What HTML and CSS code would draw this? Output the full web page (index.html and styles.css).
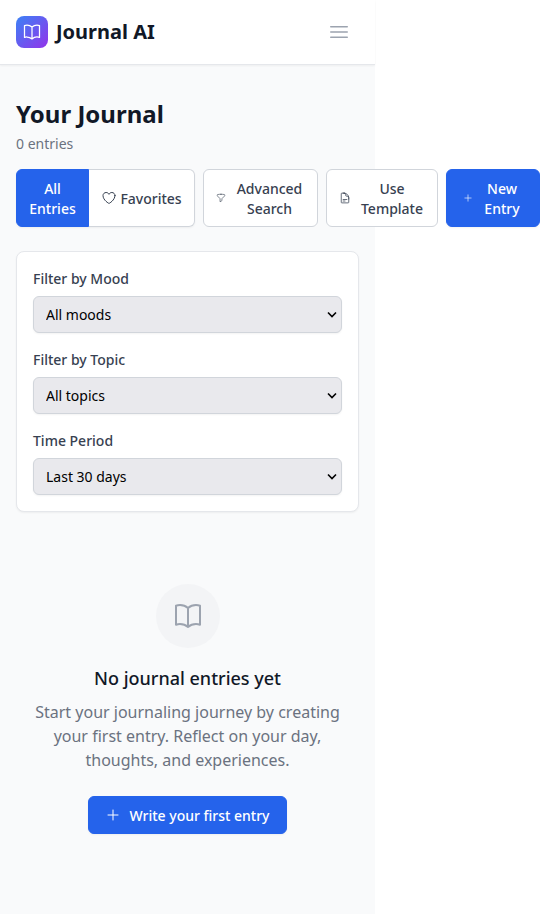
FILE: index.html
```html
<!DOCTYPE html>
<html lang="en">
<head>
  <meta charset="utf-8">
  <meta name="viewport" content="width=device-width, initial-scale=1">
  <title>Journal AI</title>
  <link rel="stylesheet" href="styles.css">
</head>
<body>
  <svg class="sprite" aria-hidden="true">
    <symbol id="book" viewBox="0 0 24 24"><path d="M12 6.042A8.967 8.967 0 0 0 6 3.75c-1.052 0-2.062.18-3 .512v14.25A8.987 8.987 0 0 1 6 18c2.305 0 4.408.867 6 2.292m0-14.25a8.966 8.966 0 0 1 6-2.292c1.052 0 2.062.18 3 .512v14.25A8.987 8.987 0 0 0 18 18a8.967 8.967 0 0 0-6 2.292m0-14.25v14.25"/></symbol>
    <symbol id="plus" viewBox="0 0 24 24"><path d="M12 4.5v15m7.5-7.5h-15"/></symbol>
    <symbol id="chevron" viewBox="0 0 10 8"><path d="M1 1.5 5 5.5 9 1.5"/></symbol>
  </svg>
  <div class="app">
    <header class="header">
      <div class="brand">
        <span class="logo"><svg class="icon icon-md" aria-hidden="true"><use href="#book"/></svg></span>
        <span>Journal AI</span>
      </div>
      <button class="menu" type="button" aria-label="Open menu">
        <svg class="icon icon-lg" viewBox="0 0 24 24" aria-hidden="true"><path d="M3.75 6.75h16.5M3.75 12h16.5m-16.5 5.25h16.5"/></svg>
      </button>
    </header>
    <main class="main">
      <h1>Your Journal</h1>
      <p class="count">0 entries</p>
      <div class="toolbar">
        <div class="segmented">
          <button class="btn active" type="button"><span>All<br>Entries</span></button>
          <button class="btn favorites" type="button">
            <svg class="icon icon-sm" viewBox="0 0 24 24" aria-hidden="true"><path d="M21 8.25c0-2.485-2.099-4.5-4.688-4.5-1.935 0-3.597 1.126-4.312 2.733-.715-1.607-2.377-2.733-4.313-2.733C5.1 3.75 3 5.765 3 8.25c0 7.22 9 12 9 12s9-4.78 9-12Z"/></svg>
            <span>Favorites</span>
          </button>
        </div>
        <button class="btn advanced" type="button">
          <svg class="icon icon-xs" viewBox="0 0 24 24" aria-hidden="true"><path d="M12 3c2.755 0 5.455.232 8.083.678.533.09.917.556.917 1.096v1.044a2.25 2.25 0 0 1-.659 1.591l-5.432 5.432a2.25 2.25 0 0 0-.659 1.591v2.927a2.25 2.25 0 0 1-1.244 2.013L9.75 21v-6.568a2.25 2.25 0 0 0-.659-1.591L3.659 7.409A2.25 2.25 0 0 1 3 5.818V4.774c0-.54.384-1.006.917-1.096A48.32 48.32 0 0 1 12 3Z"/></svg>
          <span class="wrap">Advanced<br>Search</span>
        </button>
        <button class="btn template" type="button">
          <svg class="icon icon-doc" viewBox="0 0 24 24" aria-hidden="true"><path d="M19.5 14.25v-2.625a3.375 3.375 0 0 0-3.375-3.375h-1.5A1.125 1.125 0 0 1 13.5 7.125v-1.5a3.375 3.375 0 0 0-3.375-3.375H8.25m0 12.75h7.5m-7.5 3H12M10.5 2.25H5.625c-.621 0-1.125.504-1.125 1.125v17.25c0 .621.504 1.125 1.125 1.125h12.75c.621 0 1.125-.504 1.125-1.125V11.25a9 9 0 0 0-9-9Z"/></svg>
          <span class="wrap">Use<br>Template</span>
        </button>
        <button class="btn primary new-entry" type="button">
          <svg class="icon icon-xs" aria-hidden="true"><use href="#plus"/></svg>
          <span class="wrap">New<br>Entry</span>
        </button>
      </div>
      <form class="filters">
        <div class="field">
          <label for="mood">Filter by Mood</label>
          <div class="select">
            <select id="mood"><option>All moods</option></select>
            <svg class="chevron" aria-hidden="true"><use href="#chevron"/></svg>
          </div>
        </div>
        <div class="field">
          <label for="topic">Filter by Topic</label>
          <div class="select">
            <select id="topic"><option>All topics</option></select>
            <svg class="chevron" aria-hidden="true"><use href="#chevron"/></svg>
          </div>
        </div>
        <div class="field">
          <label for="period">Time Period</label>
          <div class="select">
            <select id="period"><option>Last 30 days</option></select>
            <svg class="chevron" aria-hidden="true"><use href="#chevron"/></svg>
          </div>
        </div>
      </form>
      <section class="empty">
        <span class="circle"><svg class="icon icon-xl" aria-hidden="true"><use href="#book"/></svg></span>
        <h2>No journal entries yet</h2>
        <p>Start your journaling journey by creating your first entry. Reflect on your day, thoughts, and experiences.</p>
        <button class="btn primary" type="button">
          <svg class="icon icon-sm" aria-hidden="true"><use href="#plus"/></svg>
          <span>Write your first entry</span>
        </button>
      </section>
    </main>
  </div>
</body>
</html>
```
FILE: styles.css
```css
* {
  box-sizing: border-box;
}

body {
  margin: 0;
  background: #fff;
  color: #111827;
  font: 16px/24px "Noto Sans", sans-serif;
}

h1,
h2,
p {
  margin: 0;
}

.sprite {
  position: absolute;
  width: 0;
  height: 0;
}

.app {
  max-width: 375px;
  min-height: 100vh;
  background: #f9fafb;
}

.icon {
  flex: none;
  fill: none;
  stroke: currentColor;
  stroke-width: 1.5;
  stroke-linecap: round;
  stroke-linejoin: round;
}

.icon-xs { width: 10px; height: 16px; }
.icon-doc { width: 12px; height: 16px; }
.icon-sm { width: 16px; height: 16px; }
.icon-md { width: 20px; height: 20px; }
.icon-lg { width: 24px; height: 24px; }
.icon-xl { width: 32px; height: 32px; }

.header {
  display: flex;
  align-items: center;
  justify-content: space-between;
  padding: 16px;
  border-bottom: 1px solid #e5e7eb;
  background: #fff;
  box-shadow: 0 1px 2px rgb(0 0 0 / 5%);
}

.brand {
  display: flex;
  align-items: center;
  gap: 8px;
  font-size: 20px;
  font-weight: 700;
  line-height: 30px;
}

.logo {
  display: grid;
  place-items: center;
  width: 32px;
  height: 32px;
  border-radius: 8px;
  background: linear-gradient(to bottom right, #3b82f6, #9333ea);
  color: #fff;
}

.menu {
  display: flex;
  padding: 0 8px;
  border: 0;
  background: none;
  color: #9ca3af;
}

.main {
  padding: 32px 16px;
}

h1 {
  font-size: 24px;
  font-weight: 700;
  line-height: 34px;
}

.count {
  margin-top: 3px;
  color: #6b7280;
  font-size: 14px;
  line-height: 20px;
}

.toolbar {
  display: flex;
  gap: 8px;
  width: max-content;
  margin-top: 15px;
}

.segmented {
  display: flex;
  border-radius: 6px;
  box-shadow: 0 1px 2px rgb(0 0 0 / 5%);
}

.btn {
  display: inline-flex;
  align-items: center;
  justify-content: center;
  gap: 8px;
  padding: 7px 12px;
  border: 1px solid #d1d5db;
  border-radius: 6px;
  background: #fff;
  color: #374151;
  font: 500 14px/20px "Noto Sans", sans-serif;
}

.btn span {
  padding-top: 2px;
}

.active,
.primary {
  border-color: #2563eb;
  background: #2563eb;
  color: #fff;
}

.primary {
  padding: 7px 16px;
  box-shadow: 0 1px 2px rgb(0 0 0 / 5%);
}

.active {
  width: 73px;
  border-radius: 6px 0 0 6px;
}

.favorites {
  gap: 3px;
  width: 106px;
  border-left: 0;
  border-radius: 0 6px 6px 0;
}

.advanced { width: 115px; }
.template { width: 112px; }
.new-entry { width: 94px; }

.wrap {
  flex: 1;
}

.filters {
  display: grid;
  gap: 16px;
  margin-top: 24px;
  padding: 16px;
  border: 1px solid #e5e7eb;
  border-radius: 8px;
  background: #fff;
  box-shadow: 0 1px 2px rgb(0 0 0 / 5%);
}

.field {
  display: grid;
  gap: 6px;
}

label {
  color: #374151;
  font-size: 14px;
  font-weight: 500;
  line-height: 22px;
}

.select {
  display: grid;
  position: relative;
}

select {
  appearance: none;
  width: 100%;
  height: 37px;
  padding: 8px 32px 7px 12px;
  border: 1px solid #d1d5db;
  border-radius: 6px;
  background-color: #e9e9ed;
  color: #000;
  font: 14px/20px "Noto Sans", sans-serif;
  box-shadow: 0 1px 2px rgb(0 0 0 / 5%);
}

.chevron {
  position: absolute;
  top: 15px;
  right: 5px;
  width: 10px;
  height: 8px;
  fill: none;
  stroke: #000;
  stroke-width: 1.6;
  pointer-events: none;
}

.empty {
  display: flex;
  flex-direction: column;
  align-items: center;
  margin-top: 24px;
  padding: 48px 0;
  text-align: center;
}

.circle {
  display: grid;
  place-items: center;
  width: 64px;
  height: 64px;
  border-radius: 50%;
  background: #f3f4f6;
  color: #9ca3af;
}

h2 {
  margin-top: 16px;
  font-size: 18px;
  font-weight: 500;
  line-height: 28px;
}

.empty p {
  max-width: 384px;
  margin: 8px 0 24px;
  color: #6b7280;
}
```
